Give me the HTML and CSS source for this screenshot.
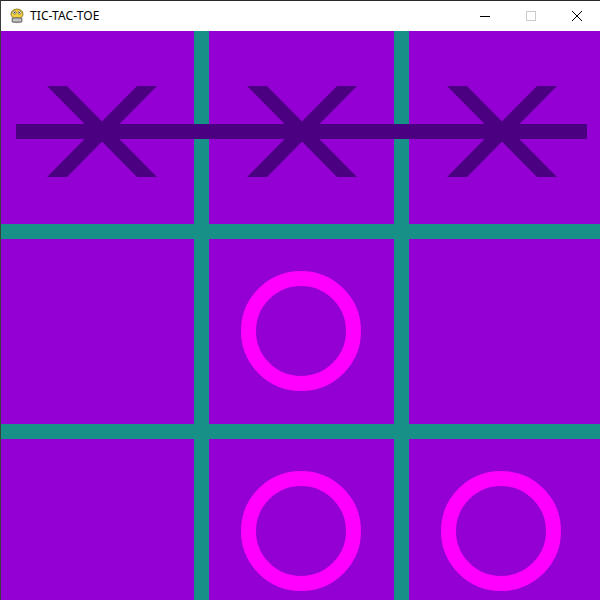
FILE: index.html
```html
<!DOCTYPE html>
<html>
<head>
<meta charset="utf-8">
<title>TIC-TAC-TOE</title>
<link rel="stylesheet" href="styles.css">
</head>
<body>
<div class="window">
  <div class="titlebar">
    <div class="app">
      <svg class="app-icon" width="16" height="16" viewBox="0 0 16 16">
        <ellipse cx="8" cy="6" rx="6" ry="5" fill="#f2d23a" stroke="#7a6a10" stroke-width="0.8"/>
        <circle cx="5.5" cy="4.5" r="1.6" fill="#fff" stroke="#333" stroke-width="0.5"/>
        <circle cx="10.5" cy="4.5" r="1.6" fill="#fff" stroke="#333" stroke-width="0.5"/>
        <circle cx="5.7" cy="4.6" r="0.6" fill="#000"/>
        <circle cx="10.3" cy="4.6" r="0.6" fill="#000"/>
        <path d="M3 10 Q8 9 13 10 L13 14 Q8 15.5 3 14 Z" fill="#9a9a9a" stroke="#555" stroke-width="0.6"/>
        <path d="M4 12 L12 12" stroke="#eee" stroke-width="1"/>
      </svg>
      <span class="app-title">TIC-TAC-TOE</span>
    </div>
    <div class="controls">
      <span class="ctl"><svg width="12" height="12" viewBox="0 0 12 12"><path d="M1 6.5 H11" stroke="#000" stroke-width="1"/></svg></span>
      <span class="ctl"><svg width="12" height="12" viewBox="0 0 12 12"><rect x="1.5" y="1.5" width="9" height="9" fill="none" stroke="#cccccc" stroke-width="1"/></svg></span>
      <span class="ctl"><svg width="12" height="12" viewBox="0 0 12 12"><path d="M1 1 L11 11 M11 1 L1 11" stroke="#000" stroke-width="1"/></svg></span>
    </div>
  </div>
  <div class="board">
    <div class="cell"></div><div class="cell"></div><div class="cell"></div>
    <div class="cell"></div><div class="cell"></div><div class="cell"></div>
    <div class="cell"></div><div class="cell"></div><div class="cell"></div>
    <svg class="marks" width="599" height="569" viewBox="0 0 599 569">
      <g class="x-mark">
        <polygon points="46,55 66,55 156,146 136,146"/>
        <polygon points="136,55 156,55 66,146 46,146"/>
        <polygon points="246,55 266,55 356,146 336,146"/>
        <polygon points="336,55 356,55 266,146 246,146"/>
        <polygon points="446,55 466,55 556,146 536,146"/>
        <polygon points="536,55 556,55 466,146 446,146"/>
      </g>
      <rect class="win-line" x="15" y="93" width="571" height="15"/>
      <g class="o-mark">
        <circle cx="300" cy="300" r="52.5"/>
        <circle cx="300" cy="500" r="52.5"/>
        <circle cx="500" cy="500" r="52.5"/>
      </g>
    </svg>
  </div>
</div>
</body>
</html>
```
FILE: styles.css
```css
html, body {
  margin: 0;
  padding: 0;
  background: #ffffff;
}
.window {
  width: 599px;
  height: 599px;
  border-top: 1px solid #2b2b2b;
  border-left: 1px solid #3c3c3c;
  display: flex;
  flex-direction: column;
  overflow: hidden;
}
.titlebar {
  height: 30px;
  background: #ffffff;
  display: flex;
  align-items: center;
  justify-content: space-between;
  flex: none;
}
.app {
  display: flex;
  align-items: center;
  padding-left: 8px;
  gap: 5px;
}
.app-icon {
  display: block;
  margin-top: 0px;
}
.app-title {
  font-family: "Noto Sans", "Open Sans", sans-serif;
  font-size: 12px;
  color: #000000;
  letter-spacing: 0.1px;
  line-height: 16px;
}
.controls {
  display: flex;
  height: 30px;
}
.ctl {
  width: 46px;
  height: 30px;
  display: flex;
  align-items: center;
  justify-content: center;
}
.ctl svg {
  display: block;
  shape-rendering: crispEdges;
}
.board {
  position: relative;
  width: 599px;
  height: 569px;
  background: #179187;
  display: grid;
  grid-template-columns: 193px 185px 1fr;
  grid-template-rows: 193px 185px 1fr;
  gap: 15px;
}
.cell {
  background: #9400d3;
}
.marks {
  position: absolute;
  left: 0;
  top: 0;
}
.x-mark polygon {
  fill: #4b0082;
}
.win-line {
  fill: #4b0082;
}
.o-mark circle {
  fill: none;
  stroke: #ff00ff;
  stroke-width: 15;
}
```
